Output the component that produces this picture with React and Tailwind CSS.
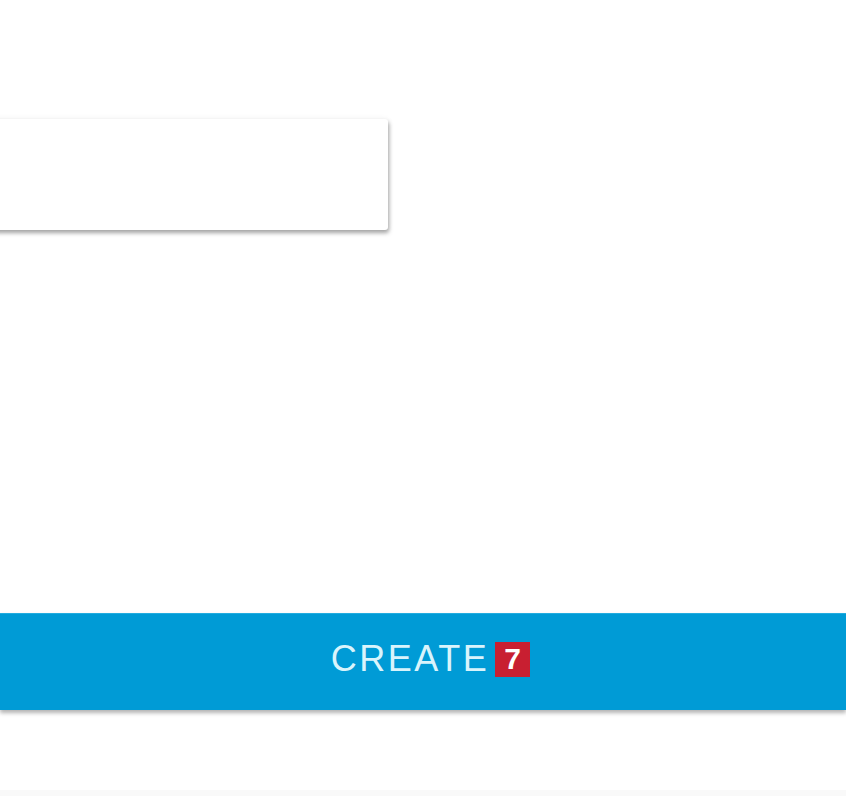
import React from 'react';

const App = () => {
  return (
    <div className="w-[846px] h-[796px] bg-white overflow-hidden flex flex-col" style={{ fontFamily: '"Liberation Sans", Arial, sans-serif' }}>
      <div className="h-[119px]" />
      <div className="-ml-[12px] w-[400px] h-[111px] bg-white rounded-[3px] shadow-[1px_3px_4px_rgba(0,0,0,0.35),0_0_6px_rgba(0,0,0,0.06)]" />
      <div className="h-[383px]" />
      <button className="w-full h-[97px] bg-[#009bd6] border-t border-[#22ace0] shadow-[0_3px_4px_rgba(0,0,0,0.3)] flex items-center justify-center gap-[6px] pb-[6px] pl-[15px]">
        <span className="text-[36px] leading-none text-[#d9f4fc] tracking-[2.5px]">CREATE</span>
        <span className="w-[35px] h-[35px] bg-[#c81f31] text-white font-bold text-[30px] leading-none flex items-center justify-center">7</span>
      </button>
      <div className="flex-1" />
      <div className="h-[6px] bg-[#f9f9f9]" />
    </div>
  );
};

export default App;
